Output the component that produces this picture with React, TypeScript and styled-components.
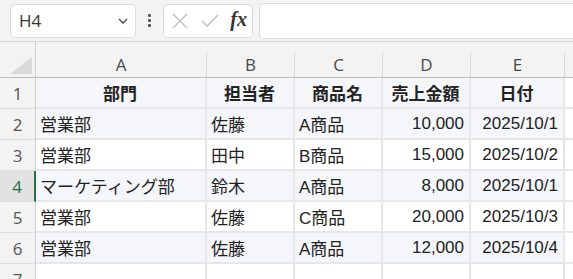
import styled, { createGlobalStyle } from "styled-components";

const GlobalStyle = createGlobalStyle`
  html, body {
    margin: 0;
    padding: 0;
    background: #ffffff;
  }
  body {
    font-family: "Liberation Sans", "Noto Sans CJK JP", sans-serif;
    overflow: hidden;
  }
`;

interface RowData {
  dept: string;
  person: string;
  product: string;
  amount: string;
  date: string;
}

const rows: RowData[] = [
  { dept: "営業部", person: "佐藤", product: "A商品", amount: "10,000", date: "2025/10/1" },
  { dept: "営業部", person: "田中", product: "B商品", amount: "15,000", date: "2025/10/2" },
  { dept: "マーケティング部", person: "鈴木", product: "A商品", amount: "8,000", date: "2025/10/1" },
  { dept: "営業部", person: "佐藤", product: "C商品", amount: "20,000", date: "2025/10/3" },
  { dept: "営業部", person: "佐藤", product: "A商品", amount: "12,000", date: "2025/10/4" },
];

const columns = ["A", "B", "C", "D", "E"];
const COLS = "36px 171px 88px 88px 88px 94px 1fr";

const App = () => {
  return (
    <Page>
      <GlobalStyle />
      <FormulaBar>
        <NameBox>
          <span>H4</span>
          <svg width="14" height="14" viewBox="0 0 14 14">
            <path d="M3 5 L7 9 L11 5" fill="none" stroke="#444" strokeWidth="1.3" />
          </svg>
        </NameBox>
        <Dots>
          <i />
          <i />
          <i />
        </Dots>
        <FxBox>
          <svg width="18" height="18" viewBox="0 0 18 18">
            <path d="M2 2 L16 16 M16 2 L2 16" stroke="#bdbdbd" strokeWidth="1.3" />
          </svg>
          <svg width="20" height="18" viewBox="0 0 20 18">
            <path d="M2 9 L7 14 L18 3" fill="none" stroke="#bdbdbd" strokeWidth="1.3" />
          </svg>
          <Fx>fx</Fx>
        </FxBox>
        <FormulaInput />
      </FormulaBar>

      <Sheet>
        <Corner>
          <svg width="22" height="17" viewBox="0 0 22 17">
            <path d="M22 0 L22 17 L0 17 Z" fill="#d9d9d9" />
          </svg>
        </Corner>
        {columns.map((c) => (
          <ColHead key={c}>{c}</ColHead>
        ))}
        <ColHead $last />

        <RowHead>1</RowHead>
        <Cell $band $bold $align="center">部門</Cell>
        <Cell $band $bold $align="center">担当者</Cell>
        <Cell $band $bold $align="center">商品名</Cell>
        <Cell $band $bold $align="center">売上金額</Cell>
        <Cell $band $bold $align="center">日付</Cell>
        <Cell />

        {rows.map((r, i) => {
          const n = i + 2;
          const band = n % 2 === 0;
          return [
            <RowHead key={`h${n}`} $active={n === 4}>{n}</RowHead>,
            <Cell key={`a${n}`} $band={band}>{r.dept}</Cell>,
            <Cell key={`b${n}`} $band={band}>{r.person}</Cell>,
            <Cell key={`c${n}`} $band={band}>{r.product}</Cell>,
            <Cell key={`d${n}`} $band={band} $align="right">{r.amount}</Cell>,
            <Cell key={`e${n}`} $band={band} $align="right">{r.date}</Cell>,
            <Cell key={`f${n}`} />,
          ];
        })}

        <RowHead>7</RowHead>
        <Cell />
        <Cell />
        <Cell />
        <Cell />
        <Cell />
        <Cell />
      </Sheet>
    </Page>
  );
};

const Page = styled.div`
  width: 573px;
  height: 279px;
  overflow: hidden;
  background: #ffffff;
`;

const FormulaBar = styled.div`
  display: flex;
  align-items: center;
  height: 42px;
  padding-left: 10px;
  background: #f3f3f3;
  border-bottom: 1px solid #d6d6d6;
  box-sizing: border-box;
`;

const NameBox = styled.div`
  width: 126px;
  height: 34px;
  box-sizing: border-box;
  display: flex;
  align-items: center;
  justify-content: space-between;
  padding: 0 5px 0 8px;
  background: #fff;
  border: 1px solid #dcdcdc;
  border-radius: 5px;
  font-family: "Open Sans", "Liberation Sans", sans-serif;
  font-size: 17px;
  color: #333;
`;

const Dots = styled.div`
  width: 27px;
  display: flex;
  flex-direction: column;
  align-items: center;
  gap: 2px;

  & i {
    width: 3px;
    height: 3px;
    background: #555;
    border-radius: 1px;
  }
`;

const FxBox = styled.div`
  width: 90px;
  height: 34px;
  box-sizing: border-box;
  display: flex;
  align-items: center;
  justify-content: space-between;
  padding: 0 5px 0 7px;
  background: #fff;
  border: 1px solid #dcdcdc;
  border-radius: 5px;
`;

const Fx = styled.span`
  font-family: "Liberation Serif", serif;
  font-style: italic;
  font-weight: bold;
  font-size: 20px;
  color: #333;
  padding-bottom: 2px;
`;

const FormulaInput = styled.div`
  flex: 1;
  height: 34px;
  margin-left: 6px;
  background: #fff;
  border: 1px solid #dcdcdc;
  border-right: none;
  border-radius: 5px 0 0 5px;
`;

const Sheet = styled.div`
  display: grid;
  grid-template-columns: ${COLS};
  grid-template-rows: 36px repeat(7, 31px);
  background: #f3f3f3;
`;

const Corner = styled.div`
  display: flex;
  align-items: flex-end;
  justify-content: flex-end;
  padding: 0 3px 3px 0;
  border-right: 1px solid #cfcfcf;
  border-bottom: 1px solid #bdbdbd;
  box-sizing: border-box;
`;

const ColHead = styled.div<{ $last?: boolean }>`
  margin-top: 10px;
  display: flex;
  align-items: center;
  justify-content: center;
  border-right: ${({ $last }) => ($last ? "none" : "1px solid #dadada")};
  border-bottom: 1px solid #bdbdbd;
  font-family: "Open Sans", "Liberation Sans", sans-serif;
  font-size: 17px;
  color: #4a4a4a;
  box-sizing: border-box;
`;

const RowHead = styled.div<{ $active?: boolean }>`
  display: flex;
  align-items: center;
  justify-content: center;
  background: ${({ $active }) => ($active ? "#e2e2e2" : "#f3f3f3")};
  color: ${({ $active }) => ($active ? "#217346" : "#555")};
  border-bottom: 1px solid #dcdcdc;
  border-right: ${({ $active }) => ($active ? "2px solid #217346" : "1px solid #cfcfcf")};
  font-family: "Open Sans", "Liberation Sans", sans-serif;
  font-size: 17px;
  box-sizing: border-box;
`;

const Cell = styled.div<{ $band?: boolean; $bold?: boolean; $align?: "left" | "center" | "right" }>`
  display: flex;
  align-items: center;
  justify-content: ${({ $align }) =>
    $align === "center" ? "center" : $align === "right" ? "flex-end" : "flex-start"};
  padding: 0 5px 0 4px;
  background: ${({ $band }) => ($band ? "#f4f6f9" : "#ffffff")};
  border-right: 2px solid #e6e6e6;
  border-bottom: 2px solid #e6e6e6;
  box-sizing: border-box;
  font-size: 17px;
  font-weight: ${({ $bold }) => ($bold ? 700 : 400)};
  color: #222;
  white-space: nowrap;
  overflow: hidden;
`;

export default App;
